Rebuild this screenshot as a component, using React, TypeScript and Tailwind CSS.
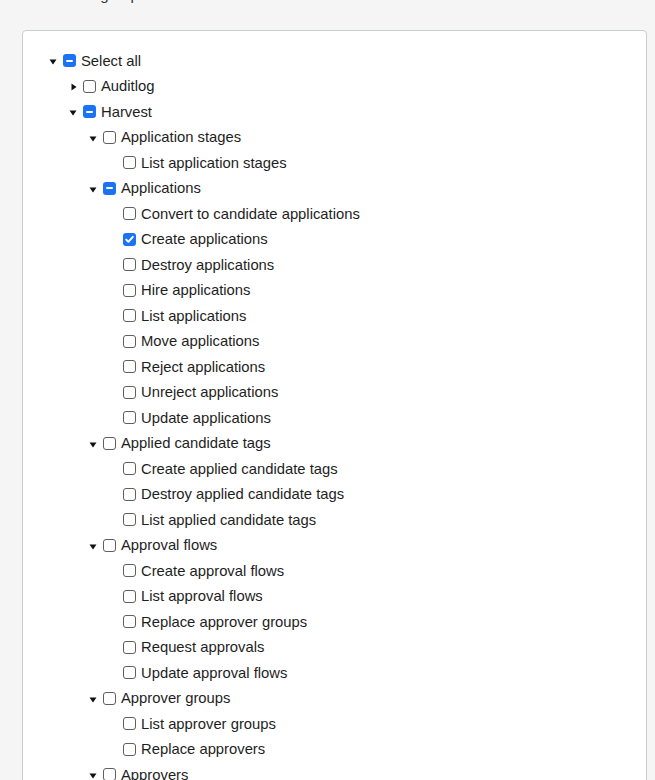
import React from "react";

type State = "off" | "on" | "some";
type Node = { label: string; state?: State; open?: boolean; children?: Node[] };

const leaves = (names: string[], checked: string[] = []): Node[] =>
  names.map((label) => ({ label, state: checked.includes(label) ? "on" : "off" }));

const tree: Node = {
  label: "Select all",
  state: "some",
  open: true,
  children: [
    { label: "Auditlog", open: false, children: [] },
    {
      label: "Harvest",
      state: "some",
      open: true,
      children: [
        { label: "Application stages", open: true, children: leaves(["List application stages"]) },
        {
          label: "Applications",
          state: "some",
          open: true,
          children: leaves(
            [
              "Convert to candidate applications",
              "Create applications",
              "Destroy applications",
              "Hire applications",
              "List applications",
              "Move applications",
              "Reject applications",
              "Unreject applications",
              "Update applications",
            ],
            ["Create applications"]
          ),
        },
        {
          label: "Applied candidate tags",
          open: true,
          children: leaves([
            "Create applied candidate tags",
            "Destroy applied candidate tags",
            "List applied candidate tags",
          ]),
        },
        {
          label: "Approval flows",
          open: true,
          children: leaves([
            "Create approval flows",
            "List approval flows",
            "Replace approver groups",
            "Request approvals",
            "Update approval flows",
          ]),
        },
        {
          label: "Approver groups",
          open: true,
          children: leaves(["List approver groups", "Replace approvers"]),
        },
        { label: "Approvers", open: true, children: leaves(["List approvers"]) },
      ],
    },
  ],
};

function Box({ state = "off" }: { state?: State }) {
  if (state === "off") {
    return <span className="w-[13px] h-[13px] rounded-[3px] border border-[#5f5f5f] bg-white shrink-0" />;
  }
  return (
    <span className="w-[13px] h-[13px] rounded-[3px] bg-[#1a73f5] shrink-0 flex items-center justify-center">
      {state === "some" ? (
        <span className="w-[7px] h-[2px] bg-white rounded-[1px]" />
      ) : (
        <svg width="11" height="11" viewBox="0 0 11 11">
          <path d="M2.2 5.6 L4.4 7.8 L8.8 2.8" fill="none" stroke="white" strokeWidth="2" strokeLinecap="round" strokeLinejoin="round" />
        </svg>
      )}
    </span>
  );
}

function Caret({ open }: { open: boolean }) {
  return (
    <span className="w-[20px] h-full flex items-center justify-center shrink-0">
      <svg width="8" height="8" viewBox="0 0 8 8" className={open ? "mt-[3px]" : "ml-[1px] mt-[2px]"}>
        {open ? <path d="M0.5 1.5 H7.5 L4 6.5 Z" fill="#111" /> : <path d="M1.5 0.5 V7.5 L6.5 4 Z" fill="#111" />}
      </svg>
    </span>
  );
}

function Row({ node, depth }: { node: Node; depth: number }) {
  const hasKids = node.children !== undefined;
  return (
    <>
      <div className="flex items-center h-[25.5px]" style={{ paddingLeft: depth * 20 }}>
        {hasKids ? <Caret open={!!node.open} /> : <span className="w-[20px] shrink-0" />}
        <Box state={node.state} />
        <span className="ml-[5px] text-[14.8px] text-[#1e1e1e] whitespace-nowrap">{node.label}</span>
      </div>
      {node.open && node.children?.map((c) => <Row key={c.label} node={c} depth={depth + 1} />)}
    </>
  );
}

export default function App() {
  return (
    <div className="h-[780px] overflow-hidden bg-[#f5f5f5] font-['Liberation_Sans',sans-serif]">
      <p className="pl-[22px] -mt-[16px] h-[46px] text-[15px] leading-[22px] text-[#333]">Permission groups</p>
      <div className="ml-[22px] w-[625px] bg-white border border-[#c8cfcc] rounded-[4px] pt-[17px] pl-[20px]">
        <Row node={tree} depth={0} />
      </div>
    </div>
  );
}
